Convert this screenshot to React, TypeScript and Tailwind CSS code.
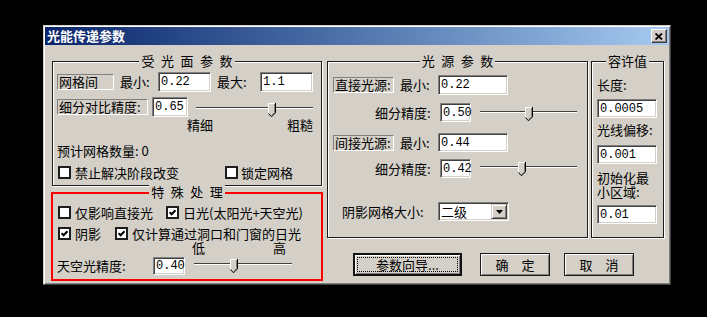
import type { ReactNode } from "react";

// classic win2000 dialog pieces
function Group({ title, className, children }: { title: string; className?: string; children?: ReactNode }) {
  return (
    <div className={`relative border border-[#1c1c1c] shadow-[inset_1px_1px_0_#fff,1px_1px_0_#fff] ${className ?? ""}`}>
      <div className="absolute inset-x-0 top-[-8px] flex justify-center">
        <span className="bg-[#d4d0c8] px-[2px] leading-[14px]">{title}</span>
      </div>
      {children}
    </div>
  );
}

function Static({ className, children }: { className?: string; children: ReactNode }) {
  return (
    <div
      className={`flex h-[16px] items-center border border-t-[#808080] border-l-[#808080] border-r-white border-b-white pl-[1px] ${className ?? ""}`}
    >
      {children}
    </div>
  );
}

function Input({ value, className }: { value: string; className?: string }) {
  return (
    <div
      className={`flex shrink-0 items-center border border-t-[#808080] border-l-[#808080] border-r-white border-b-white bg-white pl-[2px] font-['Liberation_Mono',monospace] text-[12px] shadow-[inset_1px_1px_0_#404040,inset_-1px_-1px_0_#d4d0c8] ${className ?? ""}`}
    >
      {value}
    </div>
  );
}

function Check({ checked }: { checked?: boolean }) {
  return (
    <span className="flex h-[13px] w-[13px] shrink-0 items-center justify-center border-2 border-[#1e1e1e] bg-white">
      {checked && (
        <svg width="7" height="7" viewBox="0 0 7 7">
          <path d="M0.5 3.2 L2.6 5.3 L6.5 1.2" stroke="#000" strokeWidth="2" fill="none" />
        </svg>
      )}
    </span>
  );
}

function Slider({ thumb, className }: { thumb: number; className?: string }) {
  return (
    <div className={`relative h-[14px] shrink-0 ${className ?? ""}`}>
      <div className="absolute inset-x-0 top-[4px] h-[2px] border-t border-t-[#404040] border-b border-b-white" />
      <svg className="absolute top-0" style={{ left: thumb }} width="8" height="14" viewBox="0 0 8 14">
        <path d="M0 0 H7 V9.5 L3.5 13.5 L0 9.5 Z" fill="#d4d0c8" />
        <path d="M0.5 10 V0.5 H6.5" stroke="#fff" fill="none" />
        <path d="M7.5 0 V9.8 L3.5 13.8 M3.5 13.8 L0.5 10.5" stroke="#000" fill="none" />
        <path d="M6.5 1 V9.4 L3.5 12.5" stroke="#808080" fill="none" />
      </svg>
    </div>
  );
}

function Button({ children, className, isDefault }: { children: ReactNode; className?: string; isDefault?: boolean }) {
  if (isDefault) {
    return (
      <div className={`flex h-[23px] border-2 border-[#111] bg-[#d4d0c8] p-[2px] shadow-[inset_1px_1px_0_#fff,inset_-1px_-1px_0_#808080] ${className ?? ""}`}>
        <div className="flex flex-1 items-center justify-center border border-dotted border-black">{children}</div>
      </div>
    );
  }
  return (
    <div
      className={`flex h-[23px] items-center justify-center border border-[#1a1a1a] bg-[#d4d0c8] shadow-[inset_1px_1px_0_#fff,inset_-1px_-1px_0_#808080] ${className ?? ""}`}
    >
      {children}
    </div>
  );
}

export default function App() {
  return (
    <div className="h-[317px] w-[707px] bg-black pl-[43px] pt-[25px] font-['Noto_Sans_CJK_SC',sans-serif] text-[13px] leading-[14px] text-black">
      <div className="flex h-[260px] w-[628px] flex-col border border-t-[#d4d0c8] border-l-[#d4d0c8] border-r-[#404040] border-b-[#404040] bg-[#d4d0c8] p-[1px] shadow-[inset_1px_1px_0_#fff,inset_-1px_-1px_0_#808080]">
        {/* Title bar */}
        <div className="flex h-[18px] shrink-0 items-center justify-between bg-linear-to-r from-[#0a246a] to-[#a6caf0] pl-[2px] pr-[2px]">
          <span className="font-bold text-white">光能传递参数</span>
          <div className="flex h-[14px] w-[16px] items-center justify-center border border-t-white border-l-white border-r-[#404040] border-b-[#404040] bg-[#d4d0c8] shadow-[inset_-1px_-1px_0_#808080]">
            <svg width="8" height="7" viewBox="0 0 8 7">
              <path d="M0.5 0.5 L7 6.5 M7 0.5 L0.5 6.5" stroke="#000" strokeWidth="1.8" />
            </svg>
          </div>
        </div>

        {/* Body */}
        <div className="flex gap-[5px] pl-[7px] pt-[16px]">
          {/* Left column */}
          <div className="flex w-[270px] flex-col">
            <Group title={"受\u2002光\u2002面\u2002参\u2002数"} className="h-[125px]">
              <div className="mt-[10px] flex h-[20px] items-center">
                <Static className="ml-[4px] w-[57px]">网格间</Static>
                <span className="ml-[6px] w-[38px]">最小:</span>
                <Input value="0.22" className="h-[20px] w-[53px]" />
                <span className="ml-[6px] w-[43px]">最大:</span>
                <Input value="1.1" className="h-[20px] w-[53px]" />
              </div>
              <div className="mt-[5px] flex h-[20px] items-center">
                <Static className="ml-[4px] w-[91px]">细分对比精度:</Static>
                <Input value="0.65" className="ml-[4px] h-[20px] w-[36px]" />
                <Slider thumb={72} className="ml-[8px] mt-[6px] w-[117px] self-start" />
              </div>
              <div className="mt-[1px] flex h-[14px]">
                <span className="ml-[134px] w-[26px]">精细</span>
                <span className="ml-[74px]">粗糙</span>
              </div>
              <div className="ml-[4px] mt-[12px]">预计网格数量: 0</div>
              <div className="mt-[8px] flex h-[13px] items-center">
                <div className="ml-[5px] flex w-[167px] items-center gap-[4px]">
                  <Check />
                  <span>禁止解决阶段改变</span>
                </div>
                <div className="flex items-center gap-[3px]">
                  <Check />
                  <span>锁定网格</span>
                </div>
              </div>
            </Group>

            <div className="relative ml-[-1px] mt-[6px] h-[89px] w-[272px] border-2 border-[#ff0000]">
              <div className="absolute inset-x-0 top-[-9px] flex justify-center">
                <span className="bg-[#d4d0c8] px-[2px] leading-[14px]">{"特\u2002殊\u2002处\u2002理"}</span>
              </div>
              <div className="mt-[12px] flex h-[13px] items-center">
                <div className="ml-[5px] flex w-[108px] items-center gap-[4px]">
                  <Check />
                  <span>仅影响直接光</span>
                </div>
                <div className="flex items-center gap-[4px]">
                  <Check checked />
                  <span>日光(太阳光+天空光)</span>
                </div>
              </div>
              <div className="mt-[8px] flex h-[13px] items-center">
                <div className="ml-[5px] flex w-[57px] items-center gap-[4px]">
                  <Check checked />
                  <span>阴影</span>
                </div>
                <div className="flex items-center gap-[4px]">
                  <Check checked />
                  <span>仅计算通过洞口和门窗的日光</span>
                </div>
              </div>
              <div className="mt-[1px] flex h-[14px]">
                <span className="ml-[139px] w-[13px]">低</span>
                <span className="ml-[68px]">高</span>
              </div>
              <div className="mt-[2px] flex h-[18px] items-center">
                <span className="ml-[4px] w-[96px]">天空光精度:</span>
                <Input value="0.40" className="h-[18px] w-[32px]" />
                <Slider thumb={36} className="ml-[9px] mt-[2px] w-[98px] self-start" />
              </div>
            </div>
          </div>

          {/* Right part */}
          <div className="flex flex-col">
            <div className="flex gap-[3px]">
              <Group title={"光\u2002源\u2002参\u2002数"} className="h-[177px] w-[261px]">
                <div className="mt-[13px] flex h-[20px] items-center">
                  <Static className="ml-[5px] w-[61px]">直接光源:</Static>
                  <span className="ml-[6px] w-[38px]">最小:</span>
                  <Input value="0.22" className="h-[20px] w-[70px]" />
                </div>
                <div className="mt-[8px] flex h-[19px] items-center">
                  <span className="ml-[47px] w-[65px]">细分精度:</span>
                  <Input value="0.50" className="h-[19px] w-[31px]" />
                  <Slider thumb={45} className="ml-[9px] mt-[4px] w-[97px] self-start" />
                </div>
                <div className="mt-[11px] flex h-[19px] items-center">
                  <Static className="ml-[5px] w-[61px]">间接光源:</Static>
                  <span className="ml-[6px] w-[38px]">最小:</span>
                  <Input value="0.44" className="h-[19px] w-[70px]" />
                </div>
                <div className="mt-[7px] flex h-[19px] items-center">
                  <span className="ml-[47px] w-[65px]">细分精度:</span>
                  <Input value="0.42" className="h-[19px] w-[31px]" />
                  <Slider thumb={38} className="ml-[9px] mt-[3px] w-[97px] self-start" />
                </div>
                <div className="mt-[24px] flex h-[19px] items-center">
                  <span className="ml-[14px] w-[96px]">阴影网格大小:</span>
                  <div className="flex h-[19px] w-[71px] items-center border border-t-[#808080] border-l-[#808080] border-r-white border-b-white bg-white pl-[2px] shadow-[inset_1px_1px_0_#404040,inset_-1px_-1px_0_#d4d0c8]">
                    <span className="flex-1">二级</span>
                    <span className="mr-[1px] flex h-[15px] w-[16px] items-center justify-center border border-t-[#d4d0c8] border-l-[#d4d0c8] border-r-[#404040] border-b-[#404040] bg-[#d4d0c8] shadow-[inset_1px_1px_0_#fff,inset_-1px_-1px_0_#808080]">
                      <svg width="7" height="4" viewBox="0 0 7 4">
                        <path d="M0 0 H7 L3.5 4 Z" fill="#000" />
                      </svg>
                    </span>
                  </div>
                </div>
              </Group>

              <Group title="容许值" className="h-[177px] w-[73px]">
                <div className="ml-[5px] mt-[16px]">长度:</div>
                <Input value="0.0005" className="ml-[5px] mt-[7px] h-[19px] w-[60px]" />
                <div className="ml-[5px] mt-[5px]">光线偏移:</div>
                <Input value="0.001" className="ml-[5px] mt-[8px] h-[19px] w-[60px]" />
                <div className="ml-[5px] mt-[7px]">
                  初始化最
                  <br />
                  小区域:
                </div>
                <Input value="0.01" className="ml-[5px] mt-[6px] h-[19px] w-[60px]" />
              </Group>
            </div>

            <div className="mt-[15px] flex pl-[26px]">
              <Button isDefault className="w-[109px]">
                参数向导...
              </Button>
              <Button className="ml-[18px] w-[70px]">确{"\u2003"}定</Button>
              <Button className="ml-[14px] w-[70px]">取{"\u2003"}消</Button>
            </div>
          </div>
        </div>
      </div>
    </div>
  );
}
